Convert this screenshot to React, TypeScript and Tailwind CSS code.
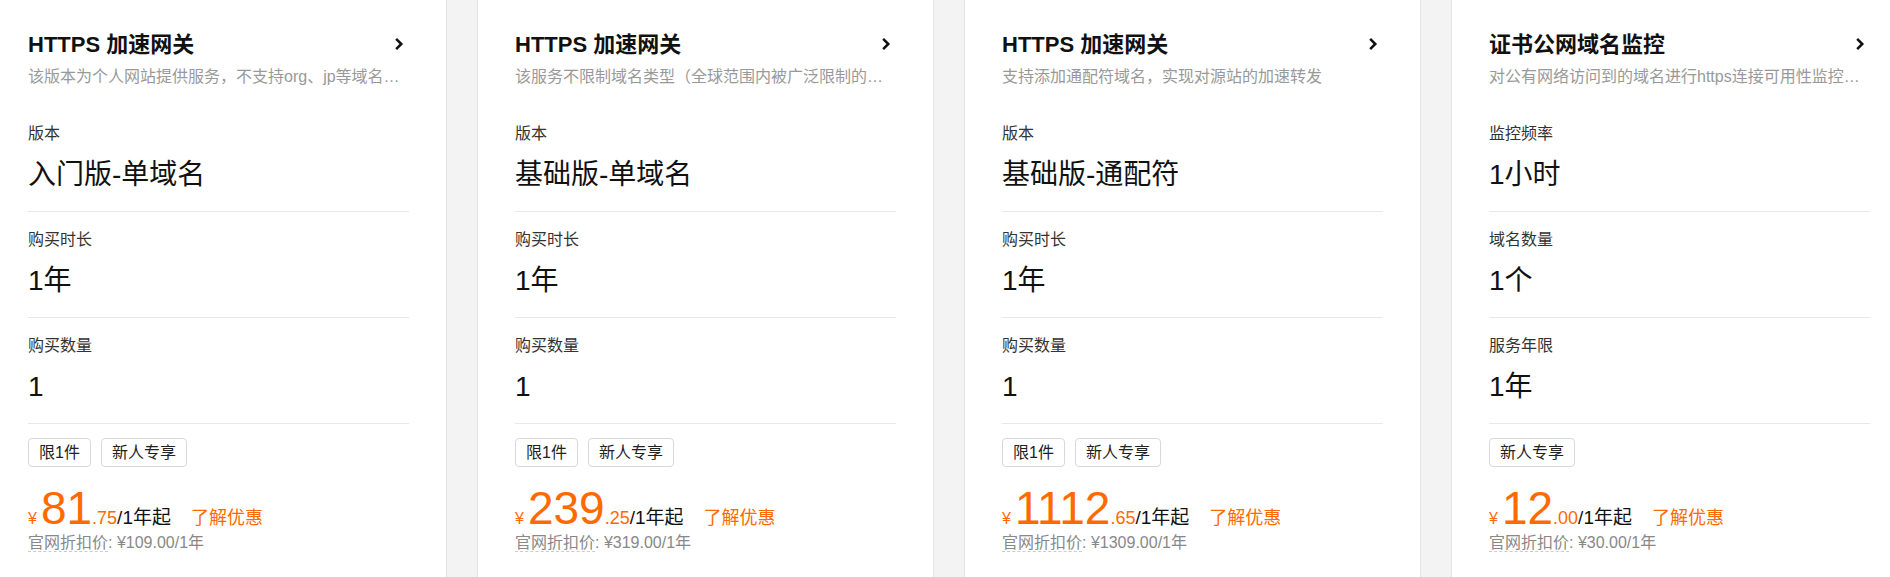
const cards = [
  {
    title: "HTTPS 加速网关",
    desc: "该版本为个人网站提供服务，不支持org、jp等域名类型",
    rows: [["版本", "入门版-单域名"], ["购买时长", "1年"], ["购买数量", "1"]],
    tags: ["限1件", "新人专享"],
    int: "81", dec: ".75", orig: "¥109.00/1年",
  },
  {
    title: "HTTPS 加速网关",
    desc: "该服务不限制域名类型（全球范围内被广泛限制的域名除外）",
    rows: [["版本", "基础版-单域名"], ["购买时长", "1年"], ["购买数量", "1"]],
    tags: ["限1件", "新人专享"],
    int: "239", dec: ".25", orig: "¥319.00/1年",
  },
  {
    title: "HTTPS 加速网关",
    desc: "支持添加通配符域名，实现对源站的加速转发",
    rows: [["版本", "基础版-通配符"], ["购买时长", "1年"], ["购买数量", "1"]],
    tags: ["限1件", "新人专享"],
    int: "1112", dec: ".65", orig: "¥1309.00/1年",
  },
  {
    title: "证书公网域名监控",
    desc: "对公有网络访问到的域名进行https连接可用性监控与告警",
    rows: [["监控频率", "1小时"], ["域名数量", "1个"], ["服务年限", "1年"]],
    tags: ["新人专享"],
    int: "12", dec: ".00", orig: "¥30.00/1年",
  },
]

const font = { fontFamily: '"Liberation Sans", "Noto Sans CJK SC", sans-serif' }

export default function App() {
  return (
    <div className="h-[577px] w-[1900px] overflow-hidden bg-[#f3f3f3] flex gap-[30px] ml-[-10px]" style={font}>
      {cards.map((c, i) => (
        <div key={i} className="w-[457px] shrink-0 bg-white px-[37px] pt-[30px] border-x border-[#e4e4e4]">
          <div className="flex items-center justify-between h-[28px]">
            <span className="text-[22px] font-bold text-[#111]">{c.title}</span>
            <svg width="16" height="16" viewBox="0 0 14 14" className="mr-[2px]">
              <path d="M4.5 2.5 L9 7 L4.5 11.5" fill="none" stroke="#111" strokeWidth="2.2" />
            </svg>
          </div>
          <div className="mt-[8px] text-[16px] text-[#999] truncate leading-[22px]">{c.desc}</div>
          <div className="mt-[18px]">
            {c.rows.map(([k, v], j) => (
              <div key={j} className="border-b border-[#e8e8e8] pt-[17px] pb-[18px]">
                <div className="text-[16px] text-[#333] leading-[22px]">{k}</div>
                <div className="mt-[12px] text-[28px] text-[#111] leading-[36px]">{v}</div>
              </div>
            ))}
          </div>
          <div className="mt-[14px] flex gap-[10px]">
            {c.tags.map((t) => (
              <span key={t} className="h-[29px] px-[10px] border border-[#d8d8d8] rounded-[4px] text-[16px] text-[#222] leading-[27px]">{t}</span>
            ))}
          </div>
          <div className="mt-[17px] flex items-baseline h-[48px]">
            <span className="text-[16px] text-[#ff6a00] mr-[4px]">¥</span>
            <span className="text-[46px] text-[#ff6a00] leading-[48px]">{c.int}</span>
            <span className="text-[18px] text-[#ff6a00]">{c.dec}</span>
            <span className="text-[19px] text-[#111]">/1年起</span>
            <span className="ml-[20px] text-[18px] text-[#ff6a00]">了解优惠</span>
          </div>
          <div className="text-[16px] text-[#888] leading-[22px]">
            <span className="border-b border-dashed border-[#ccc]">官网折扣价</span>: {c.orig}
          </div>
        </div>
      ))}
    </div>
  )
}
